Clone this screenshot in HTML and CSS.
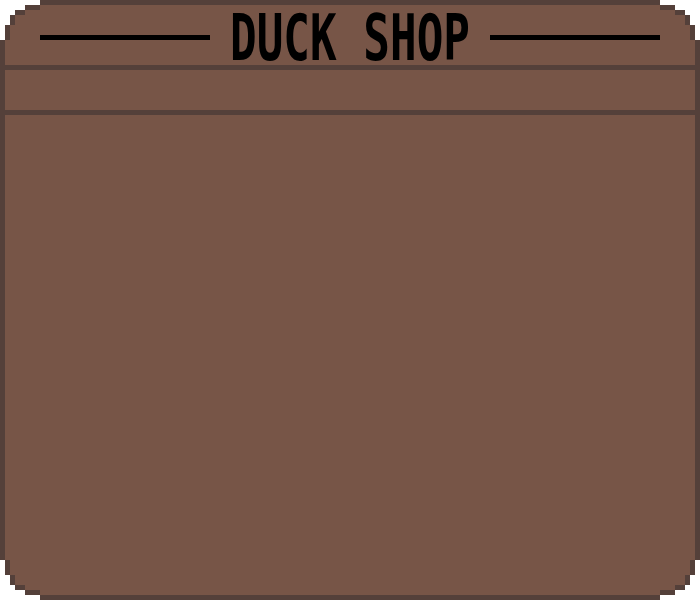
FILE: index.html
```html
<!DOCTYPE html>
<html lang="en">
<head>
<meta charset="utf-8">
<title>Duck Shop</title>
<link rel="stylesheet" href="styles.css">
</head>
<body>
<div class="shop">
  <div class="panel">
    <header class="shop-header">
      <span class="rule"></span>
      <h1 class="title">
        <svg class="title-svg" width="280" height="80" viewBox="0 0 280 80">
          <text x="20" y="60" textLength="240" lengthAdjust="spacingAndGlyphs">DUCK SHOP</text>
        </svg>
      </h1>
      <span class="rule"></span>
    </header>
    <div class="toolbar"></div>
    <main class="content"></main>
  </div>
</div>
</body>
</html>
```

FILE: styles.css
```css
html, body {
  margin: 0;
  padding: 0;
  background: #ffffff;
}

.shop {
  --edge: #54403a;
  width: 700px;
  height: 600px;
  box-sizing: border-box;
  padding: 5px;
  display: flex;
  background: var(--edge);
  clip-path: polygon(
    0 40px, 5px 40px, 5px 25px, 10px 25px, 10px 15px, 15px 15px, 15px 10px, 25px 10px, 25px 5px, 40px 5px, 40px 0,
    660px 0, 660px 5px, 675px 5px, 675px 10px, 685px 10px, 685px 15px, 690px 15px, 690px 25px, 695px 25px, 695px 40px, 700px 40px,
    700px 560px, 695px 560px, 695px 575px, 690px 575px, 690px 585px, 685px 585px, 685px 590px, 675px 590px, 675px 595px, 660px 595px, 660px 600px,
    40px 600px, 40px 595px, 25px 595px, 25px 590px, 15px 590px, 15px 585px, 10px 585px, 10px 575px, 5px 575px, 5px 560px, 0 560px
  );
}

/* inner panel: stepped "pixel" corners painted in the edge colour */
.panel {
  flex: 1;
  display: flex;
  flex-direction: column;
  background:
    linear-gradient(var(--edge), var(--edge)) left top / 35px 5px no-repeat,
    linear-gradient(var(--edge), var(--edge)) left top / 20px 10px no-repeat,
    linear-gradient(var(--edge), var(--edge)) left top / 10px 20px no-repeat,
    linear-gradient(var(--edge), var(--edge)) left top / 5px 35px no-repeat,
    linear-gradient(var(--edge), var(--edge)) right top / 35px 5px no-repeat,
    linear-gradient(var(--edge), var(--edge)) right top / 20px 10px no-repeat,
    linear-gradient(var(--edge), var(--edge)) right top / 10px 20px no-repeat,
    linear-gradient(var(--edge), var(--edge)) right top / 5px 35px no-repeat,
    linear-gradient(var(--edge), var(--edge)) left bottom / 35px 5px no-repeat,
    linear-gradient(var(--edge), var(--edge)) left bottom / 20px 10px no-repeat,
    linear-gradient(var(--edge), var(--edge)) left bottom / 10px 20px no-repeat,
    linear-gradient(var(--edge), var(--edge)) left bottom / 5px 35px no-repeat,
    linear-gradient(var(--edge), var(--edge)) right bottom / 35px 5px no-repeat,
    linear-gradient(var(--edge), var(--edge)) right bottom / 20px 10px no-repeat,
    linear-gradient(var(--edge), var(--edge)) right bottom / 10px 20px no-repeat,
    linear-gradient(var(--edge), var(--edge)) right bottom / 5px 35px no-repeat,
    #775547;
}

.shop-header {
  height: 60px;
  padding: 0 35px;
  display: flex;
  align-items: flex-start;
  border-bottom: 5px solid var(--edge);
}

.rule {
  flex: 1;
  height: 5px;
  margin-top: 30px;
  background: #000000;
}

.title {
  width: 280px;
  height: 60px;
  margin: -5px 0 0;
  line-height: 0;
}

.title-svg {
  display: block;
  overflow: visible;
}

.title-svg text {
  font-family: "DejaVu Sans Mono", "Liberation Mono", monospace;
  font-weight: bold;
  font-size: 64.5px;
  fill: #000000;
}

.toolbar {
  height: 40px;
  border-bottom: 5px solid var(--edge);
}

.content {
  flex: 1;
}
```
